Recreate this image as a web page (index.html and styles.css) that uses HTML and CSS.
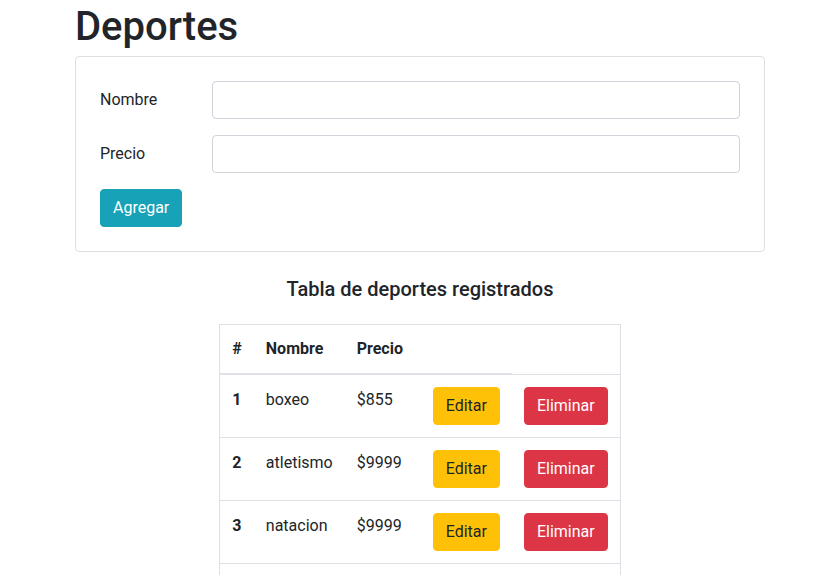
FILE: index.html
```html
<!DOCTYPE html>
<html lang="es">
<head>
<meta charset="utf-8">
<title>Deportes</title>
<link rel="stylesheet" href="styles.css">
</head>
<body>
<div class="container">
  <h1 class="page-title">Deportes</h1>
  <div class="card">
    <form class="card-body">
      <div class="form-row">
        <label class="form-label" for="nombre">Nombre</label>
        <div class="form-field"><input class="form-control" id="nombre" type="text"></div>
      </div>
      <div class="form-row">
        <label class="form-label" for="precio">Precio</label>
        <div class="form-field"><input class="form-control" id="precio" type="text"></div>
      </div>
      <button class="btn btn-info" type="button">Agregar</button>
    </form>
  </div>
  <h5 class="section-title">Tabla de deportes registrados</h5>
  <table class="table">
    <thead>
      <tr><th class="col-idx">#</th><th class="col-name">Nombre</th><th class="col-price">Precio</th><th class="col-edit"></th></tr>
    </thead>
    <tbody>
      <tr><th>1</th><td>boxeo</td><td>$855</td><td><button class="btn btn-warning" type="button">Editar</button></td><td><button class="btn btn-danger" type="button">Eliminar</button></td></tr>
      <tr><th>2</th><td>atletismo</td><td>$9999</td><td><button class="btn btn-warning" type="button">Editar</button></td><td><button class="btn btn-danger" type="button">Eliminar</button></td></tr>
      <tr><th>3</th><td>natacion</td><td>$9999</td><td><button class="btn btn-warning" type="button">Editar</button></td><td><button class="btn btn-danger" type="button">Eliminar</button></td></tr>
      <tr class="row-empty"><th></th><td></td><td></td><td></td><td></td></tr>
    </tbody>
  </table>
</div>
</body>
</html>
```

FILE: styles.css
```css
* { box-sizing: border-box; }
html, body { margin: 0; }
body {
  font-family: Roboto, "Liberation Sans", Arial, sans-serif;
  font-size: 16px;
  line-height: 1.5;
  color: #212529;
  background: #fff;
}
.container {
  max-width: 720px;
  margin: 0 auto;
  padding: 0 15px;
}
.page-title {
  font-size: 40px;
  font-weight: 500;
  line-height: 1.2;
  padding-top: 3px;
  margin: 0 0 5px;
}
.card {
  border: 1px solid rgba(0,0,0,.125);
  border-radius: 4px;
}
.card-body {
  padding: 24px;
  margin: 0;
}
.form-row {
  display: grid;
  grid-template-columns: 112px 1fr;
  margin-bottom: 16px;
}
.form-label {
  padding-top: 7px;
  padding-bottom: 7px;
  line-height: 1.5;
}
.form-control {
  display: block;
  width: 100%;
  height: 38px;
  padding: 6px 12px;
  font: inherit;
  color: #495057;
  border: 1px solid #ced4da;
  border-radius: 4px;
  background: #fff;
}
.btn {
  display: inline-block;
  font-family: inherit;
  font-size: 16px;
  line-height: 1.5;
  padding: 6px 12px;
  border: 1px solid transparent;
  border-radius: 4px;
  cursor: pointer;
}
.btn-info { background: #17a2b8; border-color: #17a2b8; color: #fff; }
.btn-warning { background: #ffc107; border-color: #ffc107; color: #212529; }
.btn-danger { background: #dc3545; border-color: #dc3545; color: #fff; }
.section-title {
  font-size: 20px;
  font-weight: 500;
  line-height: 1.2;
  text-align: center;
  padding-top: 1px;
  margin: 24px 0 23px;
}
.table {
  margin: 0 auto;
  border-collapse: collapse;
  border: 1px solid #dee2e6;
}
.table th, .table td {
  padding: 12px;
  vertical-align: top;
  text-align: left;
  border-top: 1px solid #dee2e6;
}
.table tbody td, .table tbody th { padding-top: 13px; padding-bottom: 11px; }
.table tbody td:nth-child(4), .table tbody td:nth-child(5) { padding-top: 12px; padding-bottom: 12px; }
.table thead th {
  vertical-align: bottom;
  border-bottom: 2px solid #dee2e6;
}
.table th { font-weight: bold; }
.col-idx { width: 34px; }
.col-name { width: 87px; }
.col-price { width: 76px; }
.col-edit { width: 89px; }
.row-empty th, .row-empty td { height: 63px; }
```
